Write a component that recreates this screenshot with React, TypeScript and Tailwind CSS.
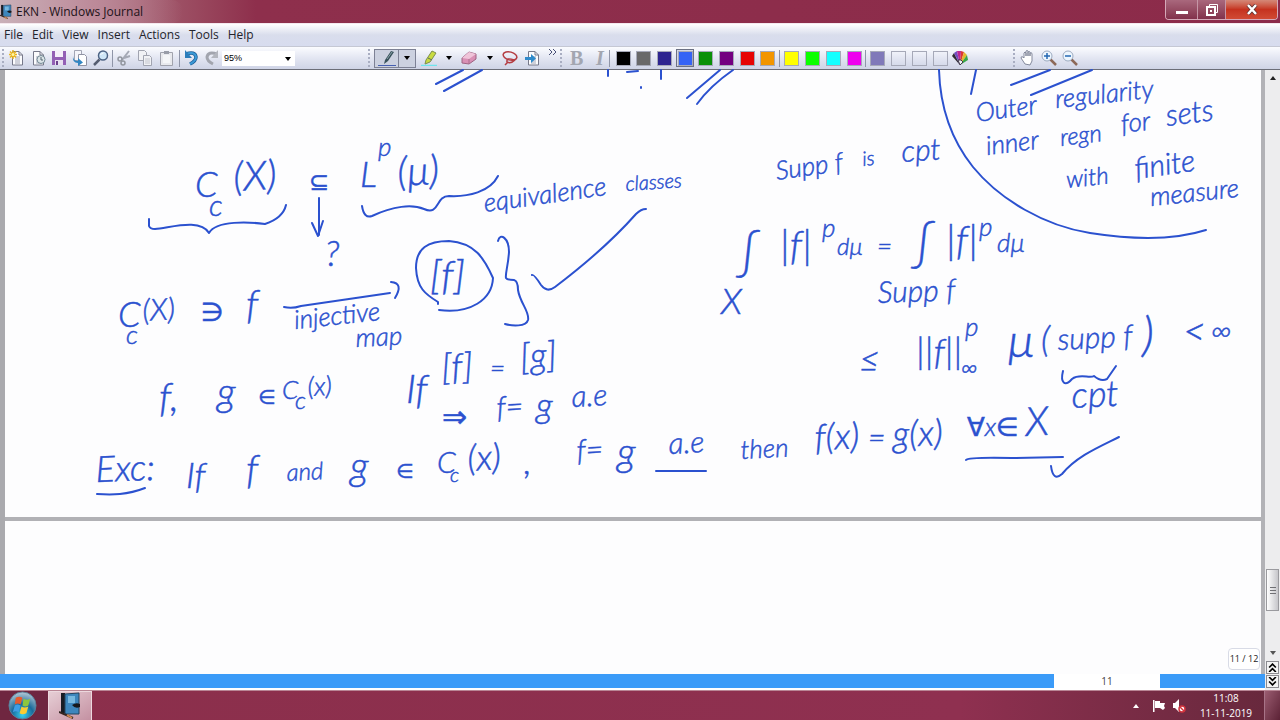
import { useState } from "react";
import type { ReactNode } from "react";

const MENUS = ["File", "Edit", "View", "Insert", "Actions", "Tools", "Help"];

const PEN_COLORS = [
  { name: "Black", bg: "bg-black" },
  { name: "Gray", bg: "bg-[#696969]" },
  { name: "Dark blue", bg: "bg-[#2d2490]" },
  { name: "Blue", bg: "bg-[#3563f5]" },
  { name: "Green", bg: "bg-[#0a9008]" },
  { name: "Purple", bg: "bg-[#730080]" },
  { name: "Red", bg: "bg-[#e60404]" },
  { name: "Orange", bg: "bg-[#f29500]" },
];

const HIGHLIGHT_COLORS = [
  { name: "Yellow", bg: "bg-[#ffff00]" },
  { name: "Lime", bg: "bg-[#0aff00]" },
  { name: "Cyan", bg: "bg-[#14ffff]" },
  { name: "Magenta", bg: "bg-[#ee00ee]" },
];

const CUSTOM_COLORS = [
  { name: "Custom 1", bg: "bg-[#8079b9]" },
  { name: "Custom 2", bg: "bg-transparent" },
  { name: "Custom 3", bg: "bg-transparent" },
  { name: "Custom 4", bg: "bg-transparent" },
];

type Note = { x: number; y: number; s: number; t: string; r?: number };

// Handwritten words: baseline position, size, tilt in degrees
const NOTES: Note[] = [
  // C_c(X) ⊆ L^p(μ)
  { x: 195, y: 197, s: 36, t: "C" },
  { x: 209, y: 216, s: 30, t: "c" },
  { x: 234, y: 191, s: 40, t: "(X)", r: -3 },
  { x: 309, y: 190, s: 24, t: "⊆" },
  { x: 325, y: 266, s: 36, t: "?" },
  { x: 360, y: 187, s: 36, t: "L" },
  { x: 378, y: 156, s: 26, t: "p" },
  { x: 398, y: 186, s: 40, t: "(μ)", r: -3 },
  { x: 485, y: 212, s: 26, t: "equivalence", r: -8 },
  { x: 626, y: 191, s: 20, t: "classes", r: -4 },
  // C_c(X) ∋ f → [f]
  { x: 118, y: 327, s: 36, t: "C" },
  { x: 126, y: 344, s: 26, t: "c" },
  { x: 143, y: 321, s: 30, t: "(X)", r: -3 },
  { x: 201, y: 321, s: 26, t: "∋" },
  { x: 246, y: 318, s: 40, t: "f" },
  { x: 295, y: 329, s: 26, t: "injective", r: -6 },
  { x: 356, y: 347, s: 26, t: "map", r: -3 },
  { x: 430, y: 289, s: 40, t: "[f]" },
  // f, g ∈ C_c(X)
  { x: 159, y: 411, s: 40, t: "f," },
  { x: 217, y: 406, s: 40, t: "g" },
  { x: 258, y: 404, s: 20, t: "∈" },
  { x: 282, y: 399, s: 26, t: "C" },
  { x: 295, y: 409, s: 24, t: "c" },
  { x: 308, y: 396, s: 26, t: "(x)", r: -3 },
  { x: 406, y: 403, s: 40, t: "If" },
  { x: 442, y: 380, s: 36, t: "[f]", r: -3 },
  { x: 490, y: 377, s: 26, t: "=" },
  { x: 521, y: 370, s: 36, t: "[g]", r: -5 },
  { x: 442, y: 427, s: 30, t: "⇒" },
  { x: 497, y: 418, s: 30, t: "f=", r: -3 },
  { x: 536, y: 418, s: 36, t: "g" },
  { x: 572, y: 407, s: 30, t: "a.e", r: -3 },
  // Exercise line
  { x: 96, y: 482, s: 36, t: "Exc:", r: -2 },
  { x: 186, y: 488, s: 36, t: "If" },
  { x: 246, y: 483, s: 40, t: "f" },
  { x: 287, y: 481, s: 24, t: "and", r: -3 },
  { x: 350, y: 480, s: 40, t: "g" },
  { x: 396, y: 478, s: 20, t: "∈" },
  { x: 437, y: 473, s: 30, t: "C" },
  { x: 450, y: 482, s: 20, t: "c" },
  { x: 468, y: 471, s: 36, t: "(x)", r: -3 },
  { x: 524, y: 474, s: 36, t: "," },
  { x: 577, y: 461, s: 30, t: "f=", r: -3 },
  { x: 617, y: 466, s: 40, t: "g" },
  { x: 669, y: 454, s: 30, t: "a.e", r: -3 },
  { x: 741, y: 459, s: 26, t: "then", r: -3 },
  { x: 815, y: 450, s: 36, t: "f(x)", r: -2 },
  { x: 868, y: 448, s: 30, t: "=" },
  { x: 893, y: 447, s: 36, t: "g(x)", r: -2 },
  { x: 967, y: 436, s: 26, t: "∀x∈" },
  { x: 1026, y: 436, s: 40, t: "X", r: -3 },
  // Support remark and the integral estimate
  { x: 777, y: 180, s: 26, t: "Supp f", r: -8 },
  { x: 863, y: 166, s: 20, t: "is", r: -6 },
  { x: 902, y: 162, s: 30, t: "cpt", r: -4 },
  { x: 738, y: 269, s: 48, t: "∫" },
  { x: 780, y: 259, s: 40, t: "|f|" },
  { x: 822, y: 237, s: 26, t: "p" },
  { x: 837, y: 255, s: 24, t: "dμ" },
  { x: 877, y: 255, s: 26, t: "=" },
  { x: 913, y: 260, s: 48, t: "∫" },
  { x: 946, y: 254, s: 40, t: "|f|" },
  { x: 979, y: 236, s: 26, t: "p" },
  { x: 997, y: 252, s: 26, t: "dμ" },
  { x: 721, y: 314, s: 36, t: "X" },
  { x: 878, y: 303, s: 30, t: "Supp f", r: -2 },
  { x: 859, y: 372, s: 36, t: "≤" },
  { x: 916, y: 364, s: 36, t: "||f||" },
  { x: 965, y: 336, s: 26, t: "p" },
  { x: 961, y: 376, s: 24, t: "∞" },
  { x: 1008, y: 357, s: 48, t: "μ" },
  { x: 1041, y: 352, s: 36, t: "(" },
  { x: 1058, y: 350, s: 30, t: "supp f", r: -3 },
  { x: 1142, y: 351, s: 48, t: ")" },
  { x: 1183, y: 345, s: 40, t: "<" },
  { x: 1211, y: 341, s: 30, t: "∞" },
  { x: 1072, y: 408, s: 36, t: "cpt", r: -3 },
  // Regularity note
  { x: 977, y: 122, s: 26, t: "Outer", r: -8 },
  { x: 1056, y: 108, s: 26, t: "regularity", r: -6 },
  { x: 987, y: 155, s: 26, t: "inner", r: -7 },
  { x: 1061, y: 146, s: 24, t: "regn", r: -7 },
  { x: 1122, y: 133, s: 26, t: "for", r: -7 },
  { x: 1167, y: 126, s: 30, t: "sets", r: -7 },
  { x: 1067, y: 188, s: 24, t: "with", r: -6 },
  { x: 1136, y: 179, s: 30, t: "finite", r: -8 },
  { x: 1151, y: 206, s: 26, t: "measure", r: -6 },
];

// Braces, arrows, rules and ticks drawn with the pen
const STROKES = [
  "M436 84 463 70M444 91 482 70M608 70v6M627 72l11-1M661 70v9M641 87v1",
  "M687 98 720 70M697 104Q710 86 733 70",
  "M939 70C940 104 949 137 973 167C1000 200 1045 226 1090 233C1135 240 1175 240 1206 230",
  "M976 70 971 94M1011 85 1050 70M1031 95 1092 70",
  "M149 219V226Q150 229 155 229C170 228 200 218 209 233C216 220 250 222 265 224Q283 218 286 205",
  "M319 198V235M312 223 318 236 323 221",
  "M362 206Q364 219 372 216C393 206 412 204 424 209C440 216 435 196 449 196C468 197 490 192 498 176",
  "M284 307Q292 309 301 306L390 293M391 282Q404 283 395 298",
  "M438 304V302C425 294 417 288 416 268C416 248 428 241 449 241C475 243 484 258 493 278C492 300 470 314 439 310",
  "M498 241C500 232 509 238 509 252C508 267 505 274 506 278Q507 280 514 280Q518 281 518 290C520 303 530 312 528 320C526 327 512 326 505 324",
  "M532 275Q534 274 541 285Q547 293 555 287C584 265 613 240 636 214Q641 209 646 209",
  "M97 494C112 495 127 495 145 488",
  "M656 471H706",
  "M966 460Q968 457 1012 458L1063 457",
  "M1051 466Q1053 482 1062 474C1077 456 1099 447 1119 437",
  "M1063 371C1060 383 1065 387 1072 379C1080 373 1090 379 1094 376Q1101 382 1107 379L1116 366",
];

function Ink() {
  return (
    <svg
      viewBox="5 70 1256 447"
      className="block w-full overflow-visible"
      fontFamily="Lato, 'DejaVu Sans', sans-serif"
      fontStyle="italic"
    >
      <g fill="none" stroke="#2b51cf" strokeWidth="2" strokeLinecap="round" strokeLinejoin="round">
        {STROKES.map((d) => (
          <path key={d} d={d} />
        ))}
      </g>
      <g fill="#2b51cf" stroke="#2b51cf" strokeWidth="0.5" fontWeight="300">
        {NOTES.map((n) => (
          <text key={`${n.x}-${n.y}`} x={n.x} y={n.y} fontSize={n.s} transform={`rotate(${n.r ?? 0} ${n.x} ${n.y})`}>
            {n.t}
          </text>
        ))}
      </g>
    </svg>
  );
}

function Tool({ label, children, disabled }: { label: string; children: ReactNode; disabled?: boolean }) {
  return (
    <button aria-label={label} disabled={disabled} className="flex size-[18px] items-center justify-center">
      <svg viewBox="0 0 16 16" className="size-4" fill="none">
        {children}
      </svg>
    </button>
  );
}

function Caret({ label }: { label: string }) {
  return (
    <button aria-label={label} className="flex h-[18px] w-3 items-center justify-center">
      <svg viewBox="0 0 6 4" className="h-1 w-1.5">
        <path d="M0 0h6L3 4z" fill="#000" />
      </svg>
    </button>
  );
}

function Divider() {
  return <div className="h-[17px] w-px bg-[#8f95a8]" />;
}

function Grip() {
  return <div className="h-[18px] w-0 border-l-2 border-dotted border-[#a9aec2]" />;
}

function Sheet({ lines = true }: { lines?: boolean }) {
  return (
    <>
      <path d="M3.500 1.500h6.500l3.500 3.500v10h-10z" fill="#fbfbfd" stroke="#77798a" />
      <path d="M10 1.500V5h3.500" stroke="#77798a" />
      {lines && <path d="M6 7h5M6 9h5M6 11h5M6 13h5" stroke="#a5a8b8" />}
    </>
  );
}

function TitleBar() {
  return (
    <header className="flex h-[23px] shrink-0 items-start justify-between bg-linear-to-r from-[#b9949f] via-[#8e2f4c] via-20% to-[#8c2b4a]">
      <div className="flex h-full items-center gap-1 rounded-r-full bg-linear-to-r from-[#c9b0b8] via-[#bd8b9a] to-transparent pr-10 text-[12px] text-[#1c1218]">
        <JournalIcon className="h-4 w-3" />
        <h1>EKN - Windows Journal</h1>
      </div>
      <div className="mr-0.5 flex h-5 overflow-hidden rounded-b border border-t-0 border-[#d5a9b8]">
        <button aria-label="Minimize" className="flex w-8 items-center justify-center border-r border-[#c596a6] bg-linear-to-b from-[#a9687d] to-[#82314b]">
          <span className="mt-1.5 h-[3px] w-3 bg-white" />
        </button>
        <button aria-label="Restore" className="flex w-7 items-center justify-center border-r border-[#c596a6] bg-linear-to-b from-[#a9687d] to-[#82314b]">
          <svg viewBox="0 0 14 12" className="h-3 w-3.5" fill="none" stroke="#fff">
            <path d="M4.500 2.500v-2h8v8h-2" />
            <rect x="2" y="3" width="8" height="8" strokeWidth="2" />
            <path d="M5 7h2" strokeWidth="2" />
          </svg>
        </button>
        <button aria-label="Close" className="flex w-[51px] items-center justify-center bg-linear-to-b from-[#d48878] via-[#c5321f] via-50% to-[#d14a34]">
          <svg viewBox="0 0 12 11" className="h-[11px] w-3" fill="none">
            <path d="M2 1l8 9M10 1 2 10" stroke="#5c3030" strokeWidth="4" />
            <path d="M2 1l8 9M10 1 2 10" stroke="#fff" strokeWidth="2.500" />
          </svg>
        </button>
      </div>
    </header>
  );
}

function JournalIcon({ className }: { className: string }) {
  return (
    <svg viewBox="0 0 22 28" className={className}>
      <path d="M2 1h4v20H2z" fill="#181c24" />
      <path d="M6 2 20 1v21L6 22z" fill="#3d86bd" stroke="#23445f" />
      <path d="M9 4h7v7H9z" fill="#77b8df" />
      <path d="M13 13q4-3 8-1v3q-5 2-8-2z" fill="#17181c" />
      <path d="M0 20 14 26" stroke="#322420" strokeWidth="2" />
      <path d="m8 23 5 3" stroke="#d0884f" strokeWidth="2" />
    </svg>
  );
}

function Swatches({
  colors,
  selected,
  onSelect,
  className,
}: {
  colors: { name: string; bg: string }[];
  selected: string;
  onSelect: (name: string) => void;
  className: string;
}) {
  return (
    <div className={`flex items-center justify-between ${className}`}>
      {colors.map((c) => (
        <button
          key={c.name}
          aria-label={c.name}
          onClick={() => onSelect(c.name)}
          className={`flex size-[18px] items-center justify-center border ${
            selected === c.name ? "border-[#6c7184] bg-[#d4d7e4]" : "border-transparent"
          }`}
        >
          <span className={`size-[15px] shrink-0 border border-[#a6a9b8] ${c.bg}`} />
        </button>
      ))}
    </div>
  );
}

function Toolbar() {
  const [color, setColor] = useState("Blue");

  return (
    <div className="flex h-[23px] shrink-0 items-center border-b border-[#6c6e78] bg-linear-to-b from-[#fbfcff] via-[#e3e6f2] to-[#cfd4e6]">
      <div className="ml-0.5 flex w-[366px] items-center">
        <Grip />
        <div className="ml-1 flex w-[102px] justify-between">
          <Tool label="New note">
            <Sheet />
            <path d="M4 0v9M0 4.500h8M1 1.500l6 6M7 1.500l-6 6" stroke="#e9b31c" strokeWidth="1.500" />
            <circle cx="4" cy="4.500" r="1.500" fill="#fff5a0" />
          </Tool>
          <Tool label="New note from template">
            <Sheet />
            <circle cx="11" cy="9.500" r="4" fill="#dce5e8" stroke="#728894" />
            <path d="M11 7v3h2" stroke="#526570" />
          </Tool>
          <Tool label="Save">
            <path d="M1 1h14v14H1z" fill="#9360b5" />
            <path d="M4 1h8v6H4z" fill="#f5effa" />
            <path d="M4 10h8v5H4z" fill="#e8dff0" />
            <path d="M5 11h2v4H5z" fill="#6c408c" />
          </Tool>
          <Tool label="Import">
            <path d="M2.500.5h7v10h-7z" fill="#f4f5fa" stroke="#a3a6b5" />
            <path d="M6.500 4.500h6l2 2v9h-8z" fill="#fff" stroke="#9093a4" />
            <path d="M1 6q0 5 5 5V8l5 4.500L6 16v-3Q0 13 1 6z" fill="#3286c2" />
          </Tool>
          <Tool label="Find">
            <path d="M6.500 9.500 1 15" stroke="#555d70" strokeWidth="2.500" />
            <circle cx="10" cy="5.500" r="4.500" fill="#cfe6f7" stroke="#4d6384" strokeWidth="1.500" />
            <path d="M7.500 5q1-2 3-2" stroke="#fff" />
          </Tool>
        </div>
        <div className="ml-0.5">
          <Divider />
        </div>
        <div className="ml-0.5 flex w-[60px] justify-between">
          <Tool label="Cut" disabled>
            <path d="M13 1 6 10M8 8l6-2" stroke="#a5a9b5" strokeWidth="2" />
            <circle cx="4" cy="9" r="2" stroke="#92969f" strokeWidth="1.500" />
            <circle cx="7" cy="13" r="2" stroke="#92969f" strokeWidth="1.500" />
          </Tool>
          <Tool label="Copy" disabled>
            <path d="M1.500.5h6l2 2v8h-8z" fill="#f0f1f5" stroke="#a1a4b0" />
            <path d="M6.500 5.500h6l2 2v8h-8z" fill="#f0f1f5" stroke="#a1a4b0" />
            <path d="M8 9h5M8 11h5M8 13h5" stroke="#c4c6ce" />
          </Tool>
          <Tool label="Paste" disabled>
            <path d="M2.500 2.500h12v13h-12z" fill="#e8e9ed" stroke="#a1a3ad" />
            <path d="M6 1h5v3H6z" fill="#999da8" />
            <path d="M5 5h7v8H5z" fill="#f5f6f8" />
          </Tool>
        </div>
        <div className="ml-1">
          <Divider />
        </div>
        <div className="ml-0.5 flex w-[39px] justify-between">
          <Tool label="Undo">
            <path d="M3 4q9-3 10 3 0 4-6 7" stroke="#1f5f96" strokeWidth="3.500" />
            <path d="M3 4q9-3 10 3 0 4-6 7" stroke="#3b99d6" strokeWidth="2" />
            <path d="M2 0v8h7z" fill="#2b7dbb" />
          </Tool>
          <Tool label="Redo" disabled>
            <path d="M13 4Q4 1 3 7q0 4 6 7" stroke="#a2a5ae" strokeWidth="3" />
            <path d="M14 0v8H7z" fill="#b3b6be" />
          </Tool>
        </div>
        <div className="relative ml-px flex w-[73px]">
          <select
            aria-label="Zoom level"
            defaultValue="95%"
            className="h-[15px] w-full appearance-none bg-white pl-0.5 font-['Liberation_Sans',sans-serif] text-[9px] leading-[15px] text-black"
          >
            <option>95%</option>
            <option>100%</option>
            <option>200%</option>
          </select>
          <svg viewBox="0 0 6 4" className="pointer-events-none absolute top-1.5 right-1 h-1 w-1.5">
            <path d="M0 0h6L3 4z" />
          </svg>
        </div>
      </div>

      <div className="flex w-[192px] items-center">
        <Grip />
        <div className="ml-1 flex h-[19px] items-center border border-[#7d8195] bg-[#ccd1e0]">
          <button aria-label="Pen" className="flex h-full w-6 items-center justify-center border-r border-[#7d8195]">
            <svg viewBox="0 0 20 16" className="h-4 w-5" fill="none">
              <path d="M1 15.500h18" stroke="#465fb1" />
              <path d="M7 14 8 10 14 1l3 1-6 9z" fill="#38515a" />
              <path d="m10 9 5-7" stroke="#89a3aa" />
            </svg>
          </button>
          <button aria-label="Pen options" className="flex h-full w-4 items-center justify-center">
            <svg viewBox="0 0 6 4" className="h-1 w-1.5">
              <path d="M0 0h6L3 4z" />
            </svg>
          </button>
        </div>
        <div className="ml-1 flex w-[122px] items-center justify-between">
          <Tool label="Highlighter">
            <path d="M0 15.500h16" stroke="#70e4ed" strokeWidth="1.500" />
            <path d="m4 14 1-4 6-9 4 2-6 9z" fill="#c9db40" stroke="#7c8e50" />
            <path d="m7 8 4 2" stroke="#5c6c5c" />
          </Tool>
          <Caret label="Highlighter options" />
          <Tool label="Eraser">
            <path d="M1 8 8 2l7 2v5l-7 5-7-1z" fill="#d990b5" stroke="#9e6482" />
            <path d="m1 8 7 1 7-5-7-2z" fill="#efc4d9" />
            <path d="M8 9v5" stroke="#aa6f8d" />
          </Tool>
          <Caret label="Eraser options" />
          <Tool label="Selection tool">
            <ellipse cx="8" cy="6" rx="7" ry="4" stroke="#b43c42" strokeWidth="1.500" transform="rotate(15 8 6)" />
            <path d="M12 10Q4 7 5 12q4 2 8-2M6 12l-3 3" stroke="#b43c42" strokeWidth="1.500" />
          </Tool>
          <Tool label="Insert space">
            <Sheet />
            <path d="M0 7h6V4l5 4.500L6 13v-3H0z" fill="#2f8acb" />
          </Tool>
        </div>
        <button aria-label="More tools" className="ml-1 flex size-3 items-start justify-center self-start">
          <svg viewBox="0 0 8 6" className="h-1.5 w-2" fill="none" stroke="#474f76">
            <path d="m1 0 3 3-3 3M5 0l3 3-3 3" />
          </svg>
        </button>
      </div>

      <div className="flex w-[453px] items-center">
        <Grip />
        <div className="ml-2 flex w-[38px] justify-between font-['Liberation_Serif',serif] text-[20px] leading-[18px] font-bold text-[#a3a6b0]">
          <button aria-label="Bold" disabled>B</button>
          <button aria-label="Italic" disabled className="w-4 italic">I</button>
        </div>
        <div className="ml-px">
          <Divider />
        </div>
        <Swatches colors={PEN_COLORS} selected={color} onSelect={setColor} className="ml-1 w-[163px]" />
        <div className="ml-0.5">
          <Divider />
        </div>
        <Swatches colors={HIGHLIGHT_COLORS} selected={color} onSelect={setColor} className="ml-0.5 w-[81px]" />
        <div className="ml-0.5">
          <Divider />
        </div>
        <Swatches colors={CUSTOM_COLORS} selected={color} onSelect={setColor} className="ml-0.5 w-[81px]" />
        <div className="ml-0.5">
          <Tool label="More colors">
            <path d="M8 15 0 6l2-3z" fill="#302c32" />
            <path d="M8 15 2 3l3-2z" fill="#734bc0" />
            <path d="M8 15 5 1h4z" fill="#bd2792" />
            <path d="M8 15 9 1l3 1z" fill="#dc3832" />
            <path d="m8 15 4-13 3 3z" fill="#e4b82c" />
            <path d="m8 15 7-10 1 5z" fill="#38a646" />
            <path d="m6 10 2 5 3-3-2-2z" fill="#f3f3f6" stroke="#403c4a" />
          </Tool>
        </div>
      </div>

      <div className="flex items-center gap-1">
        <Grip />
        <div className="flex w-[60px] justify-between">
          <Tool label="Pan">
            <path
              d="M5 14 1 8q0-2 2-1l1 1V3q1-2 2 0v3-5q1-1 2 0v5-4q1-1 2 0v4-3q2-1 2 1v7l-2 4z"
              fill="#fff"
              stroke="#83899c"
            />
          </Tool>
          <Tool label="Zoom in">
            <path d="m9 9 6 6" stroke="#8d6958" strokeWidth="2.500" />
            <circle cx="6" cy="6" r="5" fill="#edf6fe" stroke="#9dabc0" />
            <path d="M3 6h6M6 3v6" stroke="#2468b3" strokeWidth="1.500" />
          </Tool>
          <Tool label="Zoom out">
            <path d="m9 9 6 6" stroke="#8d6958" strokeWidth="2.500" />
            <circle cx="6" cy="6" r="5" fill="#edf6fe" stroke="#9dabc0" />
            <path d="M3 6h6" stroke="#2468b3" strokeWidth="1.500" />
          </Tool>
        </div>
      </div>
    </div>
  );
}

function ScrollBar() {
  return (
    <div className="flex w-[15px] shrink-0 flex-col items-center bg-[#ededee]">
      <button aria-label="Scroll up" className="flex h-4 w-full items-center justify-center">
        <svg viewBox="0 0 6 4" className="h-1 w-1.5">
          <path d="M0 4h6L3 0z" fill="#222" />
        </svg>
      </button>
      <div className="flex w-full flex-1 flex-col items-center justify-end pb-9">
        <div className="flex h-[42px] w-[13px] flex-col items-center justify-center gap-0.5 border border-[#9a9a9e] bg-linear-to-r from-white to-[#c6c6ca]">
          <span className="h-px w-1.5 bg-[#707074]" />
          <span className="h-px w-1.5 bg-[#707074]" />
          <span className="h-px w-1.5 bg-[#707074]" />
        </div>
      </div>
      <button aria-label="Scroll down" className="flex h-3 w-full items-center justify-center">
        <svg viewBox="0 0 6 4" className="h-1 w-1.5">
          <path d="M0 0h6L3 4z" fill="#555" />
        </svg>
      </button>
      <div className="flex flex-col gap-px pt-0.5 pb-0.5">
        <button aria-label="Previous page" className="flex h-[13px] w-[13px] items-center justify-center border border-[#8b8b90] bg-[#f4f4f4]">
          <svg viewBox="0 0 8 8" className="size-[9px]" fill="none" stroke="#000" strokeWidth="1.500">
            <path d="m1 4 3-3 3 3M1 8l3-3 3 3" />
          </svg>
        </button>
        <button aria-label="Next page" className="flex h-[13px] w-[13px] items-center justify-center border border-[#8b8b90] bg-[#f4f4f4]">
          <svg viewBox="0 0 8 8" className="size-[9px]" fill="none" stroke="#000" strokeWidth="1.500">
            <path d="m1 0 3 3 3-3M1 4l3 3 3-3" />
          </svg>
        </button>
      </div>
    </div>
  );
}

function Taskbar() {
  return (
    <footer className="flex h-[30px] shrink-0 items-stretch border-t border-[#b98695] bg-linear-to-r from-[#8b2f4b] via-[#8f3050] via-75% to-[#66283c]">
      <button aria-label="Start" className="flex w-12 items-center justify-center bg-[#6f2640] pr-1">
        <svg viewBox="0 0 30 30" className="size-[29px]">
          <defs>
            <radialGradient id="orb" cx="50%" cy="85%" r="80%">
              <stop offset="0" stopColor="#35d0f0" />
              <stop offset="0.500" stopColor="#196a9b" />
              <stop offset="1" stopColor="#a5bfd0" />
            </radialGradient>
          </defs>
          <circle cx="15" cy="15" r="14" fill="url(#orb)" stroke="#5a8098" />
          <path d="M8 7q4-2 7 0l-2 7q-3-2-6 0z" fill="#e85a2c" />
          <path d="M16 8q4 2 7 0l-2 7q-3 2-6 0z" fill="#8cc63e" />
          <path d="M7 15q3-2 6 0l-2 7q-3-2-6 0z" fill="#3f9ee4" />
          <path d="M14 16q3 2 7 0l-2 7q-4 2-7 0z" fill="#f9cb33" />
        </svg>
      </button>
      <button aria-label="Windows Journal" className="flex w-11 items-center justify-center border border-b-0 border-[#ecd8de] bg-linear-to-br from-[#e6ced5] to-[#c491a2]">
        <JournalIcon className="h-7 w-[22px]" />
      </button>
      <div className="ml-auto flex items-center">
        <button aria-label="Show hidden icons" className="mr-2 flex size-4 items-center justify-center">
          <svg viewBox="0 0 6 4" className="h-1 w-1.5">
            <path d="M0 4h6L3 0z" fill="#fff" />
          </svg>
        </button>
        <svg viewBox="0 0 14 14" className="mr-1.5 size-3.5">
          <path d="M1 1h1.500v12H1z" fill="#fff" />
          <path d="M3 2h5v2h5l-1 3 1 2-2 2-3-2H3z" fill="#fff" />
        </svg>
        <svg viewBox="0 0 14 14" className="mr-3 size-3.5">
          <path d="M1 4h2l4-4v13L3 9H1z" fill="#fff" />
          <circle cx="10" cy="10" r="3" fill="#fff" stroke="#d3343d" strokeWidth="1.500" />
          <path d="m8 8 4 4" stroke="#d3343d" strokeWidth="1.500" />
        </svg>
        <div className="mr-2.5 w-[56px] text-center text-[10px] leading-[15px] text-white">
          <div>11:08</div>
          <div>11-11-2019</div>
        </div>
        <button aria-label="Show desktop" className="h-full w-4 border-l border-[#a87488] bg-linear-to-br from-[#9a5c71] to-[#5c2236]" />
      </div>
    </footer>
  );
}

export default function App() {
  return (
    <div className="flex h-screen flex-col overflow-hidden bg-white font-['Open_Sans','Noto_Sans',sans-serif]">
      <TitleBar />
      <nav className="flex h-6 shrink-0 items-center gap-[9px] border-t border-b border-t-[#f4e8ee] border-b-[#c5c8d4] bg-linear-to-b from-white via-[#d9ddec] to-[#d7dcef] pl-1 text-[12px] text-[#23242c]">
        {MENUS.map((m) => (
          <button key={m}>{m}</button>
        ))}
      </nav>
      <Toolbar />

      <div className="flex min-h-0 flex-1">
        <main className="flex min-w-0 flex-1 flex-col">
          <div className="flex min-h-0 flex-1 flex-col border-r-4 border-l-[5px] border-r-[#b2b2b6] border-l-[#aaaaae] bg-[#fdfdfe]">
            <Ink />
            <div className="h-1 shrink-0 bg-[#b1b1b5]" />
            <div className="flex flex-1 items-end justify-end pr-px pb-1">
              <div className="flex h-[22px] w-8 items-center justify-center rounded-sm border border-[#d8dbe6] bg-white text-[9px] text-[#222]">
                11 / 12
              </div>
            </div>
          </div>
          <div className="flex h-[14px] shrink-0 bg-[#3b9bf8]">
            <div className="mr-[105px] ml-auto w-[106px] bg-white text-center text-[10px] leading-[14px] text-[#444]">11</div>
          </div>
          <div className="h-0.5 shrink-0 bg-white" />
        </main>
        <ScrollBar />
      </div>

      <Taskbar />
    </div>
  );
}
